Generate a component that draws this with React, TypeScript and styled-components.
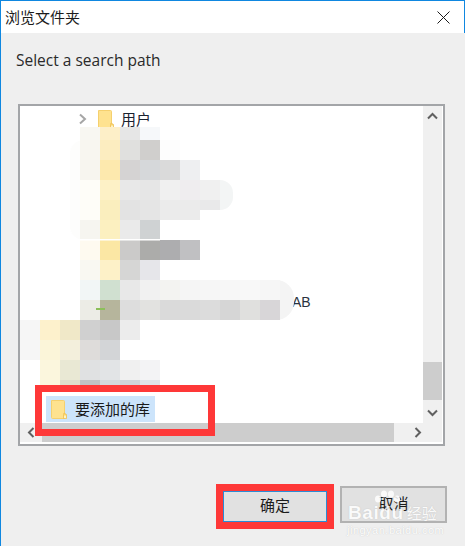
import React from "react";
import styled, { createGlobalStyle } from "styled-components";

const Global = createGlobalStyle`
  html, body { margin: 0; padding: 0; background: #f0f0f0; overflow: hidden; }
  * { box-sizing: border-box; }
`;

const cjk = `"Noto Sans CJK SC", "Noto Sans", sans-serif`;

const Win = styled.div`
  position: relative;
  width: 465px;
  height: 546px;
  display: flex;
  flex-direction: column;
  background: #efefef;
  border-left: 1px solid #0f87e0;
  font-family: ${cjk};
  color: #1c1c1c;
  overflow: hidden;
`;
const TitleBar = styled.div`
  height: 33px;
  flex: none;
  display: flex;
  align-items: center;
  justify-content: space-between;
  background: #fff;
  border-top: 1px solid #0f87e0;
  border-right: 1px solid #0f87e0;
  padding: 0 14px 0 4px;
  font-size: 15px;
  line-height: 32px;
`;
const Prompt = styled.div`
  height: 71px;
  flex: none;
  padding: 15px 0 0 15px;
  font-family: "Open Sans", sans-serif;
  font-size: 15.5px;
  line-height: 24px;
  color: #2a2a2a;
`;
const TreeBox = styled.div`
  flex: none;
  margin-left: 17px;
  width: 427px;
  height: 342px;
  border: 2px solid #a3a5a8;
  background: #fff;
  display: grid;
  grid-template-columns: 403px 20px;
  grid-template-rows: 317px 21px;
`;
const TreePane = styled.div`
  position: relative;
  overflow: hidden;
  display: flex;
  flex-direction: column;
  justify-content: space-between;
  background: #fff;
`;
const UsersRow = styled.div`
  display: flex;
  align-items: center;
  height: 26px;
  padding-left: 58px;
  font-size: 15px;
  gap: 9px;
`;
const Chevron = styled.svg`
  width: 10px;
  height: 12px;
  margin-right: 1px;
  flex: none;
`;
const Folder = styled.svg`
  width: 16px;
  height: 21px;
  flex: none;
`;
const UsersLabel = styled.span`
  line-height: 20px;
  margin-left: -2px;
  color: #1a2230;
`;
const SelectedRow = styled.div`
  display: inline-flex;
  align-items: center;
  align-self: flex-start;
  margin: 0 0 1px 26px;
  width: 109px;
  height: 26px;
  padding-left: 5px;
  gap: 8px;
  background: #cce4fb;
  font-size: 15px;
  color: #1a1a1a;
`;
const RowLabel = styled.span`
  line-height: 20px;
`;
const Mosaic = styled.svg`
  position: absolute;
  left: 0;
  top: 0;
`;
const HiddenText = styled.span`
  position: absolute;
  left: 272px;
  top: 188px;
  font-family: "Liberation Sans", sans-serif;
  font-size: 14px;
  line-height: 16px;
  color: #2b3240;
`;
const VScroll = styled.div`
  background: #f0f0f0;
  display: flex;
  flex-direction: column;
  justify-content: space-between;
  align-items: center;
  margin-right: 1px;
`;
const ArrowBox = styled.div`
  height: 20px;
  width: 19px;
  flex: none;
  display: flex;
  align-items: center;
  justify-content: center;
`;
const VTrack = styled.div`
  flex: 1;
  width: 19px;
  display: flex;
  flex-direction: column;
  justify-content: flex-end;
`;
const VThumb = styled.div`
  width: 19px;
  height: 38px;
  margin-bottom: 3px;
  background: #cdcdcd;
`;
const HScroll = styled.div`
  grid-column: 1 / span 2;
  background: #f0f0f0;
  display: flex;
  align-items: center;
  height: 19px;
  margin-right: 1px;
`;
const HThumb = styled.div`
  width: 352px;
  height: 19px;
  background: #cdcdcd;
`;
const HArrow = styled.div`
  width: 22px;
  height: 19px;
  flex: none;
  display: flex;
  align-items: center;
  justify-content: center;
`;
const HEnd = styled(HArrow)`
  margin-left: auto;
  width: 48px;
`;
const Footer = styled.div`
  display: flex;
  align-items: flex-start;
  margin-top: 38px;
  padding-left: 215px;
`;
const Highlight = styled.div`
  border: 7px solid #fe3838;
  flex: none;
`;
const Button = styled.div`
  font-size: 15px;
  line-height: 20px;
  display: flex;
  align-items: center;
  justify-content: center;
  background: #e1e1e1;
  color: #1c1c1c;
`;
const OkButton = styled(Button)`
  width: 104px;
  height: 31px;
  border: 1px solid #2a8bd6;
  padding-bottom: 3px;
`;
const CancelButton = styled(Button)`
  width: 107px;
  height: 37px;
  margin: 2px 0 0 6px;
  border: 2px solid #b2b2b2;
  padding-bottom: 3px;
`;
const Annotation = styled.div`
  position: absolute;
  left: 34px;
  top: 385px;
  width: 180px;
  height: 51px;
  border: 7px solid #fe3838;
`;
const Watermark = styled.div`
  position: absolute;
  left: 346px;
  top: 488px;
  width: 100px;
  color: #fff;
  font-family: "Liberation Sans", sans-serif;
  text-shadow: 0 0 1px rgba(150, 150, 150, 0.55);
  pointer-events: none;
`;
const Paw = styled.svg`
  position: absolute;
  left: 26px;
  top: 2px;
`;
const Brand = styled.div`
  position: absolute;
  left: 1px;
  top: 14px;
  font-size: 19px;
  font-weight: 700;
  line-height: 22px;
  letter-spacing: 0.6px;
  white-space: nowrap;
  opacity: 0.85;
`;
const BrandCn = styled.span`
  font-family: ${cjk};
  font-weight: 400;
  font-size: 15px;
  letter-spacing: 0;
  margin-left: 3px;
`;
const Domain = styled.div`
  position: absolute;
  left: 0;
  top: 36px;
  font-size: 11px;
  line-height: 12px;
  letter-spacing: 0.5px;
  white-space: nowrap;
  opacity: 0.95;
`;

const FolderIcon = () => (
  <Folder viewBox="0 0 16 21">
    <path d="M0.5 1.5 H12.5 Q13.5 1.5 13.5 2.5 V19.5 H1.5 Q0.5 19.5 0.5 18.5 Z" fill="#fee28f" stroke="#f5d06e" />
    <path d="M13 14 L15.5 15.5 V19.5 H12.5 V15.5 Z" fill="#fbd467" stroke="#eec05a" strokeWidth="0.8" />
    <rect x="13" y="16.5" width="2" height="2.6" fill="#fff3c4" />
  </Folder>
);

type Row = [number, number, string[]];
const rows: Row[] = [
  [127, 13, ["#f8f7f2", "#fdefc8", "#e6e6e6", "#f6f8fa"]],
  [140, 20, ["#f8f6f0", "#fcedc0", "#e0e0de", "#d0cfcd", "#fdfdfd"]],
  [160, 20, ["#f7f5ef", "#fde9ae", "#d5d3d3", "#d6d8da", "#dadada", "#eeeff1"]],
  [180, 20, ["#fefdf8", "#fdf1c6", "#e8e8e8", "#e6e6e6", "#f0f0f0", "#efedef", "#f0f0f0"]],
  [200, 10, ["#fefdf8", "#faeebe", "#e3e3e3", "#e5e5e5", "#ebebeb", "#ebebeb", "#e9e9ea"]],
  [210, 10, ["#fefdf8", "#faeebe", "#e3e3e3", "#e5e5e5", "#ebebeb", "#ebebeb"]],
  [220, 20, ["#f6f5f0", "#fcf0c0", "#eaeaea", "#cfd2d3"]],
  [240, 20, ["#fefaf0", "#fbe7a4", "#cbcac9", "#acacaa", "#adadaf", "#c0c0c2"]],
  [260, 20, ["#f9f8f2", "#fdf1c8", "#d6d6d5", "#e6e6ea"]],
  [280, 20, ["#f2f6f6", "#d0e0d0", "#e8e8e8", "#f1f1f1", "#f3f3f1", "#f5f5f5", "#f6f6f6", "#f7f7f7", "#f8f8f8", "#f6f6f6"]],
  [300, 20, ["#ecece6", "#b6b59c", "#dddddd", "#e2e2e0", "#dadada", "#dadada", "#dcdcdc", "#d6d6d6", "#e0e0de", "#d8d6d8"]],
];
const lowerRows: Row[] = [
  [320, 20, ["#f6f6f6", "#fdf1cc", "#f0e8c8", "#d0d0d0", "#c8c8c8", "#ececec"]],
  [340, 20, ["#f6f6f6", "#fbf5d9", "#f3efdc", "#dedcda", "#d3d5d7"]],
  [360, 20, ["#ffffff", "#fbf6dd", "#e9e8d4", "#e0e1e2", "#e2e4e6", "#f0f0f0", "#f3f3f5"]],
  [380, 5, ["#ffffff", "#fbf6dd", "#dfdfcb", "#c0c4c6", "#d4d8dc", "#d0d4d8", "#e0e4e8"]],
];

export default function App() {
  return (
    <>
      <Global />
      <Win>
        <TitleBar>
          <span>浏览文件夹</span>
          <svg width="13" height="13" viewBox="0 0 13 13">
            <path d="M0.5 0.5 L12.5 12.5 M12.5 0.5 L0.5 12.5" stroke="#1a1a1a" strokeWidth="1" fill="none" />
          </svg>
        </TitleBar>
        <Prompt>Select a search path</Prompt>
        <TreeBox>
          <TreePane>
            <UsersRow>
              <Chevron viewBox="0 0 10 12">
                <path d="M2 1.5 L7 6 L2 10.5" stroke="#a6a6a6" strokeWidth="2" fill="none" />
              </Chevron>
              <FolderIcon />
              <UsersLabel>用户</UsersLabel>
            </UsersRow>
            <HiddenText>AB</HiddenText>
            <Mosaic width="403" height="317" viewBox="20 106 403 317">
              <rect x="70" y="140" width="30" height="100" rx="14" fill="#fdfdfc" />
              <rect x="205" y="180" width="28" height="30" rx="13" fill="#f3f5f5" />
              <rect x="180" y="280" width="114" height="40" rx="18" fill="#f4f4f4" />
              {rows.map(([y, h, cells]) =>
                cells.map((c, i) => <rect key={`${y}-${i}`} x={80 + i * 20} y={y} width="20" height={h} fill={c} />)
              )}
              {lowerRows.map(([y, h, cells]) =>
                cells.map((c, i) => <rect key={`${y}-${i}`} x={20 + i * 20} y={y} width="20" height={h} fill={c} />)
              )}
              <rect x="96" y="308" width="9" height="2" fill="#8cbf5a" />
              <rect x="80" y="239" width="80" height="1.5" fill="#ffffff" />
            </Mosaic>
            <SelectedRow>
              <FolderIcon />
              <RowLabel>要添加的库</RowLabel>
            </SelectedRow>
          </TreePane>
          <VScroll>
            <ArrowBox>
              <svg width="11" height="8" viewBox="0 0 11 8">
                <path d="M1 6.5 L5.5 2 L10 6.5" stroke="#606060" strokeWidth="2" fill="none" />
              </svg>
            </ArrowBox>
            <VTrack>
              <VThumb />
            </VTrack>
            <ArrowBox>
              <svg width="11" height="8" viewBox="0 0 11 8">
                <path d="M1 1.5 L5.5 6 L10 1.5" stroke="#606060" strokeWidth="2" fill="none" />
              </svg>
            </ArrowBox>
          </VScroll>
          <HScroll>
            <HArrow>
              <svg width="8" height="11" viewBox="0 0 8 11">
                <path d="M6.5 1 L2 5.5 L6.5 10" stroke="#606060" strokeWidth="2" fill="none" />
              </svg>
            </HArrow>
            <HThumb />
            <HEnd>
              <svg width="8" height="11" viewBox="0 0 8 11">
                <path d="M1.5 1 L6 5.5 L1.5 10" stroke="#606060" strokeWidth="2" fill="none" />
              </svg>
            </HEnd>
          </HScroll>
        </TreeBox>
        <Footer>
          <Highlight>
            <OkButton>确定</OkButton>
          </Highlight>
          <CancelButton>取消</CancelButton>
        </Footer>
        <Annotation />
        <Watermark>
          <Paw width="28" height="18" viewBox="0 0 28 18">
            <g fill="#ffffff" opacity="0.85">
              <ellipse cx="5" cy="9" rx="3" ry="3.6" />
              <ellipse cx="11" cy="4" rx="3" ry="3.6" />
              <ellipse cx="18" cy="4" rx="3" ry="3.6" />
              <ellipse cx="24" cy="9" rx="3" ry="3.6" />
            </g>
          </Paw>
          <Brand>
            Baidu<BrandCn>经验</BrandCn>
          </Brand>
          <Domain>jingyan.baidu.com</Domain>
        </Watermark>
      </Win>
    </>
  );
}
